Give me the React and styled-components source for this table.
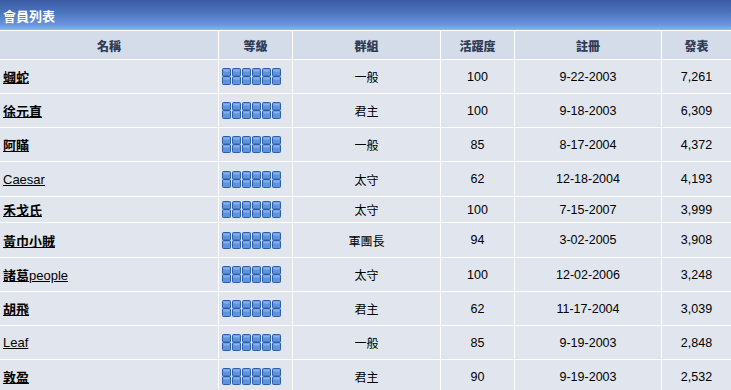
import React from "react";
import styled, { createGlobalStyle } from "styled-components";

const Global = createGlobalStyle`
  html, body { margin: 0; padding: 0; background: #e1e6ee; }
  body { font-family: "Liberation Sans", "Noto Sans CJK TC", sans-serif; }
`;

const Page = styled.div`
  width: 731px;
  display: flex;
  flex-direction: column;
  background: #ffffff;
  gap: 1px;
`;

const TitleBar = styled.div`
  height: 30px;
  display: flex;
  align-items: center;
  padding-left: 3px;
  color: #ffffff;
  font-weight: bold;
  font-size: 13px;
  background: linear-gradient(to bottom, #3b5aa3 0%, #4f76c0 45%, #6b98e0 85%, #8ab6f3 100%);
`;

const Grid = styled.div`
  display: grid;
  grid-template-columns: 218px 73px 147px 73px 146px 1fr;
  gap: 1px;
  background: #ffffff;
`;

const HeadCell = styled.div`
  height: 28px;
  display: flex;
  align-items: center;
  justify-content: center;
  background: #d3dce8;
  color: #2f3c58;
  font-weight: 900;
  font-size: 12px;
`;

const Cell = styled.div`
  height: ${(p) => p.$h}px;
  display: flex;
  align-items: center;
  justify-content: ${(p) => (p.$left ? "flex-start" : "center")};
  padding-left: ${(p) => (p.$left ? "3px" : "0")};
  background: #e1e6ee;
  color: #000000;
  font-size: ${(p) => (p.$num ? "12.5px" : "12px")};
`;

const NameLink = styled.a`
  color: #000000;
  text-decoration: underline;
  font-size: 13px;
  cursor: pointer;
`;

const Cjk = styled.span`
  font-weight: bold;
`;

const Latin = styled.span`
  font-weight: normal;
`;

function RankIcon() {
  const blocks = [0, 1, 2, 3, 4, 5];
  return (
    <svg width="59" height="17" viewBox="0 0 59 17">
      {blocks.map((i) => {
        const x = i * 10;
        return (
          <g key={i}>
            <rect x={x + 0.5} y="0.5" width="8" height="7.5" rx="1" fill="#5f93dc" stroke="#2f5ea9" />
            <rect x={x + 0.5} y="8.5" width="8" height="8" rx="1" fill="#5f93dc" stroke="#2f5ea9" />
            <rect x={x + 1.5} y="1.5" width="6" height="2" fill="#86b2ee" />
            <rect x={x + 1.5} y="9.5" width="6" height="2" fill="#86b2ee" />
          </g>
        );
      })}
    </svg>
  );
}

function Name({ parts }) {
  return (
    <NameLink>
      {parts.map((p, i) =>
        p.b ? <Cjk key={i}>{p.t}</Cjk> : <Latin key={i}>{p.t}</Latin>
      )}
    </NameLink>
  );
}

const rows = [
  { name: [{ t: "蟈蛇", b: true }], group: "一般", act: "100", reg: "9-22-2003", posts: "7,261", h: 33 },
  { name: [{ t: "徐元直", b: true }], group: "君主", act: "100", reg: "9-18-2003", posts: "6,309", h: 33 },
  { name: [{ t: "阿瞞", b: true }], group: "一般", act: "85", reg: "8-17-2004", posts: "4,372", h: 33 },
  { name: [{ t: "Caesar", b: false }], group: "太守", act: "62", reg: "12-18-2004", posts: "4,193", h: 34 },
  { name: [{ t: "禾戈氏", b: true }], group: "太守", act: "100", reg: "7-15-2007", posts: "3,999", h: 25 },
  { name: [{ t: "黃巾小賊", b: true }], group: "軍團長", act: "94", reg: "3-02-2005", posts: "3,908", h: 34 },
  { name: [{ t: "諸葛", b: true }, { t: "people", b: false }], group: "太守", act: "100", reg: "12-02-2006", posts: "3,248", h: 33 },
  { name: [{ t: "胡飛", b: true }], group: "君主", act: "62", reg: "11-17-2004", posts: "3,039", h: 33 },
  { name: [{ t: "Leaf", b: false }], group: "一般", act: "85", reg: "9-19-2003", posts: "2,848", h: 33 },
  { name: [{ t: "敦盈", b: true }], group: "君主", act: "90", reg: "9-19-2003", posts: "2,532", h: 33 },
];

const headers = ["名稱", "等級", "群組", "活躍度", "註冊", "發表"];

export default function App() {
  return (
    <>
      <Global />
      <Page>
        <TitleBar>會員列表</TitleBar>
        <Grid>
          {headers.map((h) => (
            <HeadCell key={h}>{h}</HeadCell>
          ))}
          {rows.map((r, i) => (
            <React.Fragment key={i}>
              <Cell $h={r.h} $left>
                <Name parts={r.name} />
              </Cell>
              <Cell $h={r.h} $left>
                <RankIcon />
              </Cell>
              <Cell $h={r.h}>{r.group}</Cell>
              <Cell $h={r.h} $num>{r.act}</Cell>
              <Cell $h={r.h} $num>{r.reg}</Cell>
              <Cell $h={r.h} $num>{r.posts}</Cell>
            </React.Fragment>
          ))}
        </Grid>
      </Page>
    </>
  );
}
